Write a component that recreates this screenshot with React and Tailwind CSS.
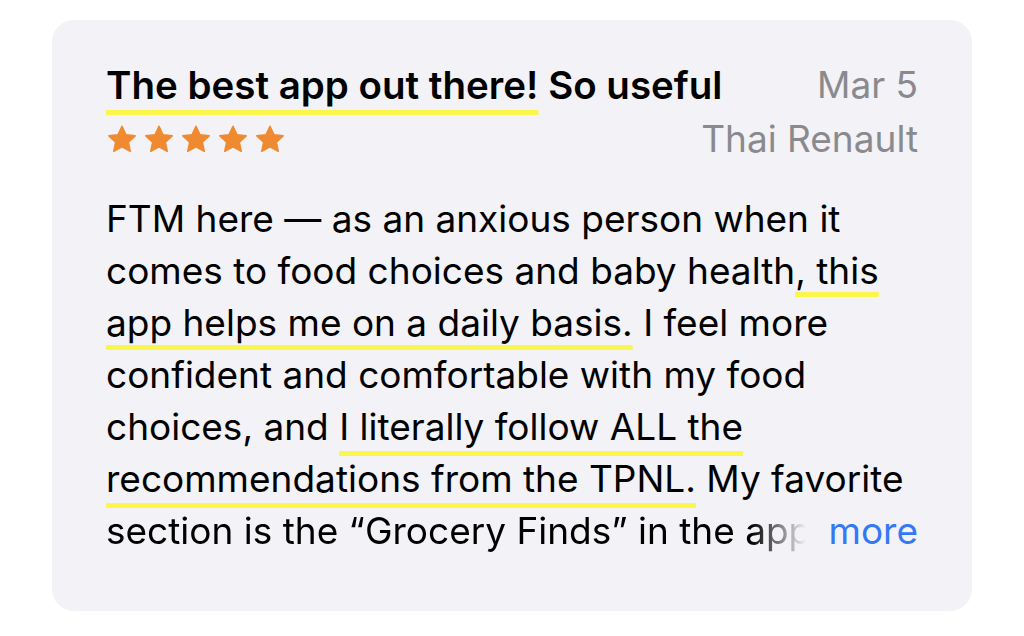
import { Fragment } from "react";

const font = { fontFamily: "Inter, 'Noto Sans', sans-serif" };

function Star() {
  return (
    <svg viewBox="0 0 24 24" className="w-[32px] h-[31px]">
      <path
        d="M12 1.8l3.1 6.6 7.1.8-5.3 4.9 1.5 7.1L12 17.6l-6.4 3.6 1.5-7.1L1.8 9.2l7.1-.8z"
        fill="#f08a30"
        stroke="#f08a30"
        strokeWidth="1.2"
        strokeLinejoin="round"
      />
    </svg>
  );
}

function Hl({ children, offset = "underline-offset-[9px]" }) {
  return (
    <span
      className={`underline decoration-[#fbf64c] decoration-[5px] [text-decoration-skip-ink:none] ${offset}`}
    >
      {children}
    </span>
  );
}

export default function App() {
  return (
    <div className="bg-white w-[1024px] h-[636px] pt-[20px] pl-[52px]" style={font}>
      <div className="w-[920px] rounded-[22px] bg-[#f2f2f7] pt-[43px] pb-[54px] px-[54px]">
        {/* HEADER */}
        <div className="flex justify-between">
          <div className="flex-1 min-w-0">
            <div className="text-[38.5px] leading-[44px] font-semibold text-black whitespace-nowrap">
              <Hl offset="underline-offset-[11px]">The best app out there!</Hl> So useful
            </div>
            <div className="mt-[17px] flex gap-[5px]">
              {[0, 1, 2, 3, 4].map((i) => (
                <Star key={i} />
              ))}
            </div>
          </div>
          <div className="shrink-0 text-right text-[37px] text-[#8a8a8e] whitespace-nowrap">
            <div className="leading-[44px]">Mar 5</div>
            <div className="leading-[44px] mt-[10px]">Thai Renault</div>
          </div>
        </div>

        {/* BODY */}
        <div className="mt-[32px] text-[37px] leading-[52px] text-black whitespace-nowrap">
          <div>FTM here — as an anxious person when it</div>
          <div>
            comes to food choices and baby health<Hl offset="underline-offset-[8px]">, this</Hl>
          </div>
          <div>
            <Hl>app helps me on a daily basis.</Hl> I feel more
          </div>
          <div>confident and comfortable with my food</div>
          <div>
            choices, and <Hl offset="underline-offset-[11px]">I literally follow ALL the</Hl>
          </div>
          <div>
            <Hl offset="underline-offset-[11px]">recommendations from the TPNL.</Hl> My favorite
          </div>
          <div className="flex justify-between">
            <span className="w-[700px] overflow-hidden [mask-image:linear-gradient(to_right,black_645px,transparent_700px)]">
              section is the “Grocery Finds” in the app
            </span>
            <span className="text-[#3478f6]">more</span>
          </div>
        </div>
      </div>
    </div>
  );
}
